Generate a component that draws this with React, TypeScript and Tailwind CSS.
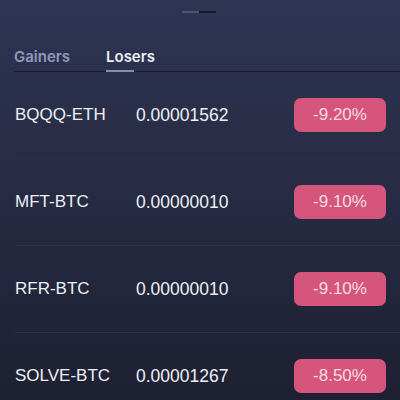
import React, { useState } from 'react';

interface Market {
  pair: string;
  price: string;
  change: string;
}

const losers: Market[] = [
  { pair: 'BQQQ-ETH', price: '0.00001562', change: '-9.20%' },
  { pair: 'MFT-BTC', price: '0.00000010', change: '-9.10%' },
  { pair: 'RFR-BTC', price: '0.00000010', change: '-9.10%' },
  { pair: 'SOLVE-BTC', price: '0.00001267', change: '-8.50%' },
];

export default function App() {
  const [tab, setTab] = useState<'gainers' | 'losers'>('losers');

  return (
    <div
      className="w-[400px] h-[400px] overflow-hidden bg-gradient-to-b from-[#2f3453] to-[#1e2133] text-[#eef0f5]"
      style={{ fontFamily: '"Liberation Sans", Arial, sans-serif' }}
    >
      {/* sheet handle */}
      <div className="flex pt-[11px] pl-[182px]">
        <span className="h-[2px] w-[17px] bg-[#4c5575]" />
        <span className="h-[2px] w-[17px] bg-[#141829]" />
      </div>

      {/* tabs */}
      <div
        className="ml-[14px] mt-[34px] flex gap-[36px] border-b border-[#1a1d2d] text-[15px] leading-[20px] font-semibold"
        style={{ fontFamily: 'Inter, "Liberation Sans", sans-serif' }}
      >
        <button
          onClick={() => setTab('gainers')}
          className={`flex flex-col items-start pb-[3px] ${tab === 'gainers' ? 'text-[#eef0f5]' : 'text-[#8d9abb]'}`}
        >
          Gainers
          {tab === 'gainers' && <span className="mt-[3px] -mb-[4px] h-[2px] w-[28px] bg-[#7f90b0]" />}
        </button>
        <button
          onClick={() => setTab('losers')}
          className={`flex flex-col items-start pb-[3px] ${tab === 'losers' ? 'text-[#eef0f5]' : 'text-[#8d9abb]'}`}
        >
          Losers
          {tab === 'losers' && <span className="mt-[3px] -mb-[4px] h-[2px] w-[28px] bg-[#7f90b0]" />}
        </button>
      </div>

      {/* rows */}
      <div>
        {losers.map((m) => (
          <div key={m.pair} className="ml-[15px] h-[87px] flex items-center border-b border-[#2d3347] text-[17px]">
            <span className="w-[121px]">{m.pair}</span>
            <span className="text-[17.5px]">{m.price}</span>
            <span className="ml-auto mr-[14px] w-[92px] h-[34px] rounded-[7px] bg-[#d6557c] text-[#f7dbe4] flex items-center justify-center">
              {m.change}
            </span>
          </div>
        ))}
      </div>
    </div>
  );
}
